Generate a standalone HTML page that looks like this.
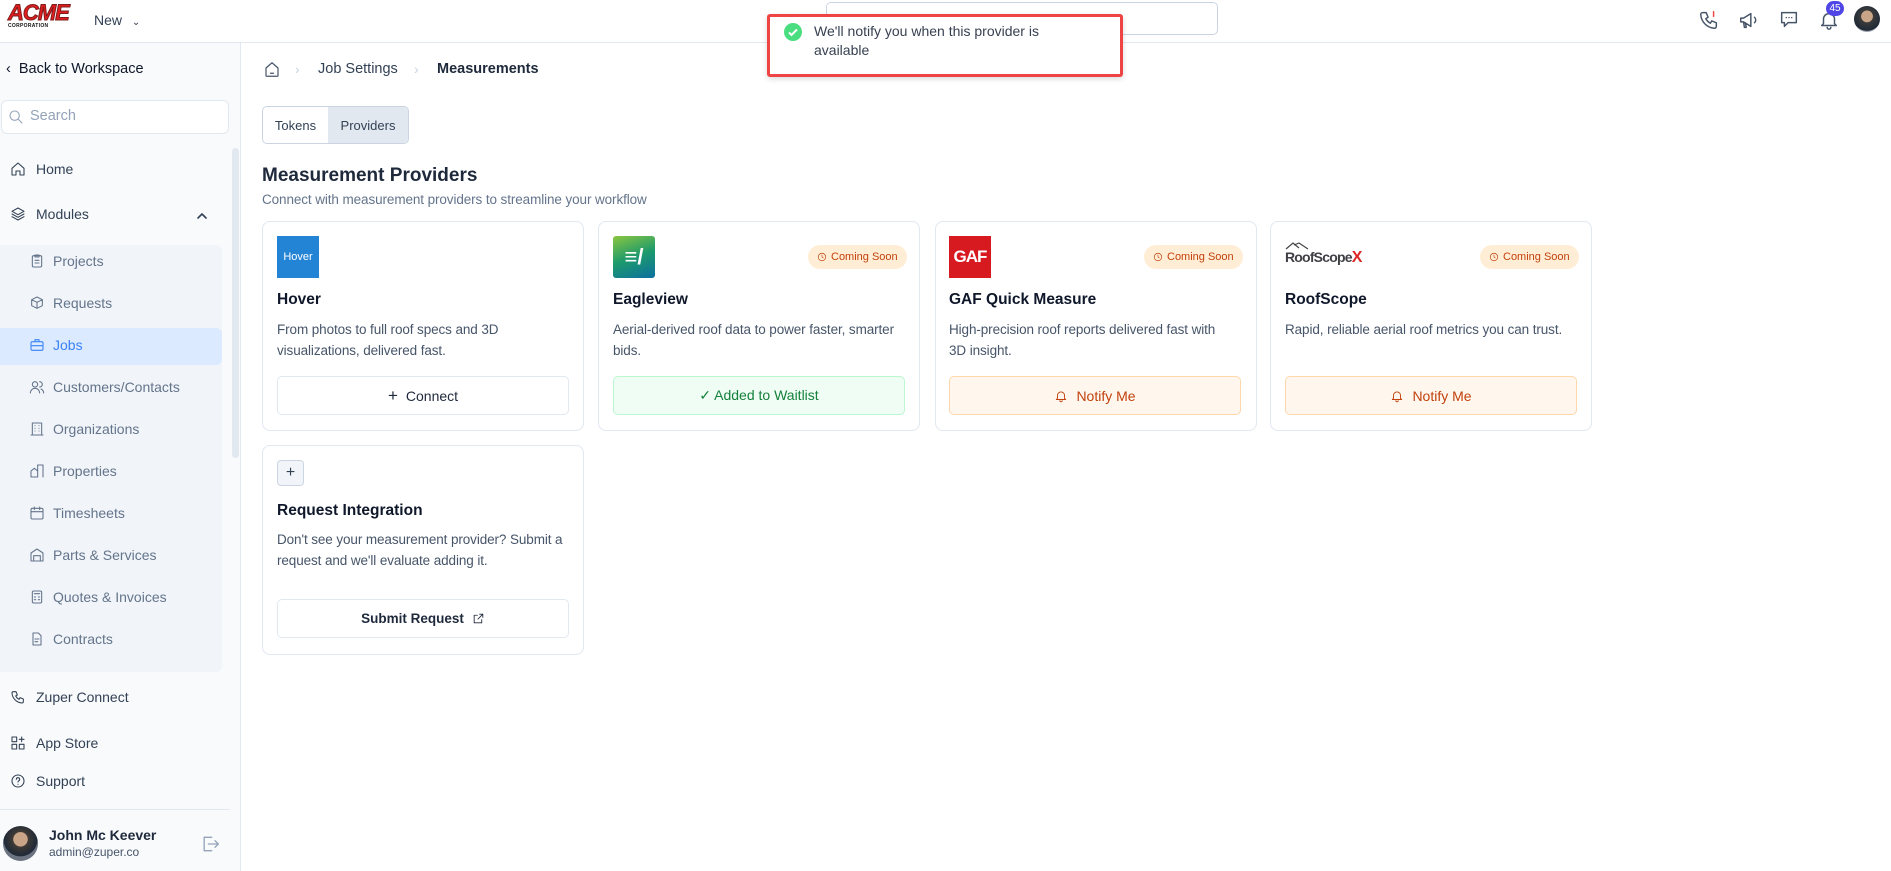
<!DOCTYPE html>
<html><head><meta charset="utf-8">
<style>
*{box-sizing:border-box;margin:0;padding:0}
body{width:1891px;height:871px;overflow:hidden;background:#fff;font-family:"Liberation Sans",Arial,sans-serif;color:#0f172a;position:relative}
.a{position:absolute}
svg{display:block}
.ic{fill:none;stroke:currentColor;stroke-width:1.6;stroke-linecap:round;stroke-linejoin:round}
.side{left:0;top:43px;width:241px;height:828px;background:#f8fafc;border-right:1px solid #e2e8f0}
.nav{left:10px;font-size:14px;color:#334155;display:flex;align-items:center;gap:10px}
.sub{left:29px;font-size:14px;color:#64748b;display:flex;align-items:center;gap:8px}
.card{border:1px solid #e2e8f0;border-radius:8px;background:#fff;width:322px}
.ttl{font-size:15.5px;font-weight:bold;color:#0f172a}
.desc{font-size:13.5px;color:#475569;line-height:21px;letter-spacing:-.1px}
.btn{height:39px;border-radius:5px;border:1px solid #e2e8f0;display:flex;align-items:center;justify-content:center;gap:8px;font-size:14px}
.badge{height:24px;border-radius:12px;background:#ffedd5;color:#c2410c;font-size:11px;display:flex;align-items:center;gap:4px;padding:0 9px}
</style></head><body>
<div class="a" style="left:0;top:0;width:1891px;height:43px;border-bottom:1px solid #e2e8f0;background:#fff"></div>
<div class="a" style="left:8px;top:3px;width:66px;height:28px">
 <div style="font:900 italic 22px/20px 'Liberation Sans';color:#e11d1d;letter-spacing:-1px;-webkit-text-stroke:1px #7f1d1d">ACME</div>
 <div style="font:bold 5px/6px 'Liberation Sans';color:#111;letter-spacing:.3px">CORPORATION</div>
</div>
<div class="a" style="left:94px;top:12px;font-size:14px;color:#334155">New <span style="font-size:10px;margin-left:6px">&#8964;</span></div>
<div class="a" style="left:826px;top:2px;width:392px;height:33px;border:1px solid #cbd5e1;border-radius:5px"></div>
<svg class="a ic" style="left:1698px;top:9px;color:#475569" width="22" height="22" viewBox="0 0 24 24"><path d="M5 4h4l2 5-2.5 1.5a11 11 0 0 0 5 5L15 13l5 2v4a2 2 0 0 1-2 2A16 16 0 0 1 3 6a2 2 0 0 1 2-2"/><path d="M17 3v5" stroke="#ef4444"/></svg>
<svg class="a ic" style="left:1738px;top:9px;color:#475569" width="22" height="22" viewBox="0 0 24 24"><path d="M3 10v4h3l8 5V5L6 10H3zM6 14l1 6h2l-1-5M18 9a4 4 0 0 1 0 6"/></svg>
<svg class="a ic" style="left:1778px;top:8px;color:#475569" width="22" height="22" viewBox="0 0 24 24"><path d="M4 5h16v11h-9l-4 4v-4H4z"/><path d="M9 10.5h.01M12 10.5h.01M15 10.5h.01"/></svg>
<svg class="a ic" style="left:1818px;top:9px;color:#475569" width="22" height="22" viewBox="0 0 24 24"><path d="M6 16V11a6 6 0 0 1 12 0v5l2 2H4zM10 20a2 2 0 0 0 4 0"/></svg>
<div class="a" style="left:1826px;top:1px;width:18px;height:15px;border-radius:8px;background:#4f46e5;color:#fff;font-size:10px;text-align:center;line-height:15px">45</div>
<div class="a" style="left:1854px;top:6px;width:26px;height:26px;border-radius:50%;background:radial-gradient(circle at 50% 40%,#c9a487 0 28%,#3b3b3b 30%,#1f2937 70%,#9ca3af 72%)"></div>
<div class="a" style="left:767px;top:14px;width:356px;height:63px;border:3px solid #ef4444;border-radius:3px;background:#fff;box-shadow:0 2px 6px rgba(0,0,0,.15)"></div>
<div class="a" style="left:784px;top:23px;width:18px;height:18px;border-radius:50%;background:#4ade80"><svg width="18" height="18" viewBox="0 0 18 18"><path d="M5 9.5l2.5 2.5L13 6.5" fill="none" stroke="#fff" stroke-width="2"/></svg></div>
<div class="a" style="left:814px;top:22px;width:280px;font-size:14px;line-height:19px;color:#374151">We'll notify you when this provider is available</div>
<div class="a side"></div>
<div class="a" style="left:6px;top:61px;font-size:14.5px;color:#0f172a">&#8249;&nbsp; Back to Workspace</div>
<div class="a" style="left:1px;top:100px;width:228px;height:34px;background:#fff;border:1px solid #e2e8f0;border-radius:6px"></div>
<svg class="a ic" style="left:8px;top:109px;color:#94a3b8" width="16" height="16" viewBox="0 0 24 24"><circle cx="10" cy="10" r="7"/><path d="M15 15l6 6"/></svg>
<div class="a" style="left:30px;top:108px;font-size:14.5px;color:#94a3b8">Search</div>
<div class="a" style="left:232px;top:148px;width:7px;height:310px;border-radius:4px;background:#e2e8f0"></div>
<div class="a nav" style="top:161px"><svg class="ic" width="16" height="16" viewBox="0 0 24 24"><path d="M3 11l9-8 9 8v10h-6v-6h-6v6H3z"/></svg>Home</div>
<div class="a nav" style="top:206px"><svg class="ic" width="16" height="16" viewBox="0 0 24 24"><path d="M12 3l9 5-9 5-9-5zM3 12l9 5 9-5M3 16l9 5 9-5"/></svg>Modules</div>
<svg class="a ic" style="left:196px;top:210px;color:#334155" width="12" height="12" viewBox="0 0 12 12"><path d="M2 8l4-4 4 4"/></svg>
<div class="a" style="left:0;top:245px;width:222px;height:427px;background:#f1f5f9;border-radius:0 6px 6px 0"></div>
<div class="a" style="left:0;top:328px;width:222px;height:37px;background:#dbeafe;border-radius:0 6px 6px 0"></div>
<div class="a sub" style="top:253px"><svg class="ic" width="16" height="16" viewBox="0 0 24 24"><rect x="5" y="4" width="14" height="17" rx="2"/><path d="M9 3h6v3H9zM9 11h6M9 15h6"/></svg>Projects</div>
<div class="a sub" style="top:295px"><svg class="ic" width="16" height="16" viewBox="0 0 24 24"><path d="M12 3l8 4v9l-8 4-8-4V7zM4 7l8 4 8-4M12 11v9"/></svg>Requests</div>
<div class="a sub" style="top:337px;color:#3b82f6"><svg class="ic" width="16" height="16" viewBox="0 0 24 24"><rect x="3" y="7" width="18" height="13" rx="2"/><path d="M9 7V4h6v3M3 13h18"/></svg>Jobs</div>
<div class="a sub" style="top:379px"><svg class="ic" width="16" height="16" viewBox="0 0 24 24"><circle cx="9" cy="8" r="4"/><path d="M2 21a7 7 0 0 1 14 0M16 4a4 4 0 0 1 0 8M22 21a7 7 0 0 0-4-6"/></svg>Customers/Contacts</div>
<div class="a sub" style="top:421px"><svg class="ic" width="16" height="16" viewBox="0 0 24 24"><rect x="5" y="3" width="14" height="18"/><path d="M9 7h.01M15 7h.01M9 11h.01M15 11h.01M9 15h.01M15 15h.01M3 21h18"/></svg>Organizations</div>
<div class="a sub" style="top:463px"><svg class="ic" width="16" height="16" viewBox="0 0 24 24"><path d="M3 21V12l5-4 5 4v9zM13 21V3h8v18"/></svg>Properties</div>
<div class="a sub" style="top:505px"><svg class="ic" width="16" height="16" viewBox="0 0 24 24"><rect x="3" y="5" width="18" height="16" rx="2"/><path d="M3 10h18M8 3v4M16 3v4"/></svg>Timesheets</div>
<div class="a sub" style="top:547px"><svg class="ic" width="16" height="16" viewBox="0 0 24 24"><path d="M3 21V9l9-6 9 6v12zM7 21v-8h10v8"/></svg>Parts &amp; Services</div>
<div class="a sub" style="top:589px"><svg class="ic" width="16" height="16" viewBox="0 0 24 24"><rect x="5" y="3" width="14" height="18" rx="2"/><path d="M8 7h8M8 12h2M14 12h2M8 16h2M14 16h2"/></svg>Quotes &amp; Invoices</div>
<div class="a sub" style="top:631px"><svg class="ic" width="16" height="16" viewBox="0 0 24 24"><path d="M14 3H6v18h12V7zM9 12h6M9 16h4"/></svg>Contracts</div>
<div class="a nav" style="top:689px"><svg class="ic" width="16" height="16" viewBox="0 0 24 24"><path d="M5 4h4l2 5-2.5 1.5a11 11 0 0 0 5 5L15 13l5 2v4a2 2 0 0 1-2 2A16 16 0 0 1 3 6a2 2 0 0 1 2-2"/></svg>Zuper Connect</div>
<div class="a nav" style="top:735px"><svg class="ic" width="16" height="16" viewBox="0 0 24 24"><rect x="3" y="3" width="7" height="7"/><rect x="3" y="14" width="7" height="7"/><rect x="14" y="14" width="7" height="7"/><path d="M17.5 3v7M14 6.5h7"/></svg>App Store</div>
<div class="a nav" style="top:773px"><svg class="ic" width="16" height="16" viewBox="0 0 24 24"><circle cx="12" cy="12" r="9"/><path d="M9.5 9.5a2.5 2.5 0 1 1 3.5 2.3c-.6.3-1 .9-1 1.7M12 17h.01"/></svg>Support</div>
<div class="a" style="left:0;top:809px;width:230px;height:1px;background:#e2e8f0"></div>
<div class="a" style="left:3px;top:826px;width:35px;height:35px;border-radius:50%;background:radial-gradient(circle at 50% 38%,#c9a487 0 25%,#3f3a36 27%,#1f2937 60%,#6b7280 62%)"></div>
<div class="a" style="left:49px;top:827px;font-size:14px;font-weight:bold;color:#1e293b">John Mc Keever</div>
<div class="a" style="left:49px;top:845px;font-size:12px;color:#475569">admin@zuper.co</div>
<svg class="a ic" style="left:200px;top:834px;color:#94a3b8" width="20" height="20" viewBox="0 0 24 24"><path d="M14 4H5v16h9M10 12h11M18 8l4 4-4 4"/></svg>
<svg class="a ic" style="left:263px;top:60px;color:#475569" width="18" height="19" viewBox="0 0 24 24"><path d="M4 10l8-7 8 7v10a1 1 0 0 1-1 1H5a1 1 0 0 1-1-1z M10 17h4"/></svg>
<div class="a" style="left:295px;top:61px;font-size:14px;color:#cbd5e1">&#8250;</div>
<div class="a" style="left:318px;top:61px;font-size:14.5px;color:#334155">Job Settings</div>
<div class="a" style="left:414px;top:61px;font-size:14px;color:#cbd5e1">&#8250;</div>
<div class="a" style="left:437px;top:61px;font-size:14.5px;font-weight:bold;color:#1e293b">Measurements</div>
<div class="a" style="left:262px;top:106px;width:147px;height:38px;border:1px solid #cbd5e1;border-radius:5px;overflow:hidden;display:flex;font-size:13px;color:#334155">
 <div style="width:65px;display:flex;align-items:center;justify-content:center">Tokens</div>
 <div style="flex:1;background:#e2e8f0;display:flex;align-items:center;justify-content:center">Providers</div>
</div>
<div class="a" style="left:262px;top:165px;font-size:19px;font-weight:bold;color:#1e293b">Measurement Providers</div>
<div class="a" style="left:262px;top:192px;font-size:13.5px;color:#64748b;letter-spacing:-.1px">Connect with measurement providers to streamline your workflow</div>

<div class="a card" style="left:262px;top:221px;height:210px"></div>
<div class="a" style="left:277px;top:236px;width:42px;height:42px;background:#2383d4;color:#fff;font-size:11px;display:flex;align-items:center;justify-content:center">Hover</div>
<div class="a ttl" style="left:277px;top:291px">Hover</div>
<div class="a desc" style="left:277px;top:319px;width:295px">From photos to full roof specs and 3D visualizations, delivered fast.</div>
<div class="a btn" style="left:277px;top:376px;width:292px;color:#1e293b"><span style="font-size:17px">+</span>Connect</div>

<div class="a card" style="left:598px;top:221px;height:210px"></div>
<div class="a" style="left:613px;top:236px;width:42px;height:42px;border-radius:3px;background:linear-gradient(160deg,#8cc63f,#1d9a6c 50%,#0d6fa0);color:#fff;font:bold 22px/42px 'Liberation Sans';text-align:center">&#8801;/</div>
<div class="a badge" style="left:808px;top:245px"><svg class="ic" width="10" height="10" viewBox="0 0 24 24"><circle cx="12" cy="12" r="9"/><path d="M12 7v5l3 2"/></svg>Coming Soon</div>
<div class="a ttl" style="left:613px;top:291px">Eagleview</div>
<div class="a desc" style="left:613px;top:319px;width:300px">Aerial-derived roof data to power faster, smarter bids.</div>
<div class="a btn" style="left:613px;top:376px;width:292px;background:#f0fdf4;border-color:#bbf7d0;color:#15803d">&#10003; Added to Waitlist</div>

<div class="a card" style="left:935px;top:221px;height:210px"></div>
<div class="a" style="left:949px;top:236px;width:42px;height:42px;background:#d71920;color:#fff;font:bold 17px/42px 'Liberation Sans';text-align:center;letter-spacing:-1px">GAF</div>
<div class="a badge" style="left:1144px;top:245px"><svg class="ic" width="10" height="10" viewBox="0 0 24 24"><circle cx="12" cy="12" r="9"/><path d="M12 7v5l3 2"/></svg>Coming Soon</div>
<div class="a ttl" style="left:949px;top:291px">GAF Quick Measure</div>
<div class="a desc" style="left:949px;top:319px;width:285px">High-precision roof reports delivered fast with 3D insight.</div>
<div class="a btn" style="left:949px;top:376px;width:292px;background:#fff7ed;border-color:#fed7aa;color:#c2410c"><svg class="ic" width="14" height="14" viewBox="0 0 24 24"><path d="M6 16V11a6 6 0 0 1 12 0v5l2 2H4zM10 20a2 2 0 0 0 4 0"/></svg>Notify Me</div>

<div class="a card" style="left:1270px;top:221px;height:210px"></div>
<svg class="a" style="left:1285px;top:242px" width="24" height="8" viewBox="0 0 24 8"><path d="M1 7L8 1l6 5M9 3l5-2 9 6" fill="none" stroke="#444" stroke-width="1.2"/></svg>
<div class="a" style="left:1285px;top:249px;font:bold 14px 'Liberation Sans';color:#3f3f46;letter-spacing:-.8px">RoofScope<span style="color:#dc2626;font-size:16px">X</span></div>
<div class="a badge" style="left:1480px;top:245px"><svg class="ic" width="10" height="10" viewBox="0 0 24 24"><circle cx="12" cy="12" r="9"/><path d="M12 7v5l3 2"/></svg>Coming Soon</div>
<div class="a ttl" style="left:1285px;top:291px">RoofScope</div>
<div class="a desc" style="left:1285px;top:319px;width:295px">Rapid, reliable aerial roof metrics you can trust.</div>
<div class="a btn" style="left:1285px;top:376px;width:292px;background:#fff7ed;border-color:#fed7aa;color:#c2410c"><svg class="ic" width="14" height="14" viewBox="0 0 24 24"><path d="M6 16V11a6 6 0 0 1 12 0v5l2 2H4zM10 20a2 2 0 0 0 4 0"/></svg>Notify Me</div>

<div class="a card" style="left:262px;top:445px;height:210px"></div>
<div class="a" style="left:277px;top:460px;width:27px;height:26px;border:1px solid #cbd5e1;border-radius:4px;background:#f1f5f9;color:#334155;font-size:16px;text-align:center;line-height:24px">+</div>
<div class="a ttl" style="left:277px;top:502px">Request Integration</div>
<div class="a desc" style="left:277px;top:529px;width:300px">Don't see your measurement provider? Submit a request and we'll evaluate adding it.</div>
<div class="a btn" style="left:277px;top:599px;width:292px;color:#1e293b;font-weight:bold;font-size:13.5px">Submit Request <svg class="ic" width="13" height="13" viewBox="0 0 24 24"><path d="M14 4h6v6M20 4l-9 9M18 14v6H4V6h6"/></svg></div>
</body></html>
